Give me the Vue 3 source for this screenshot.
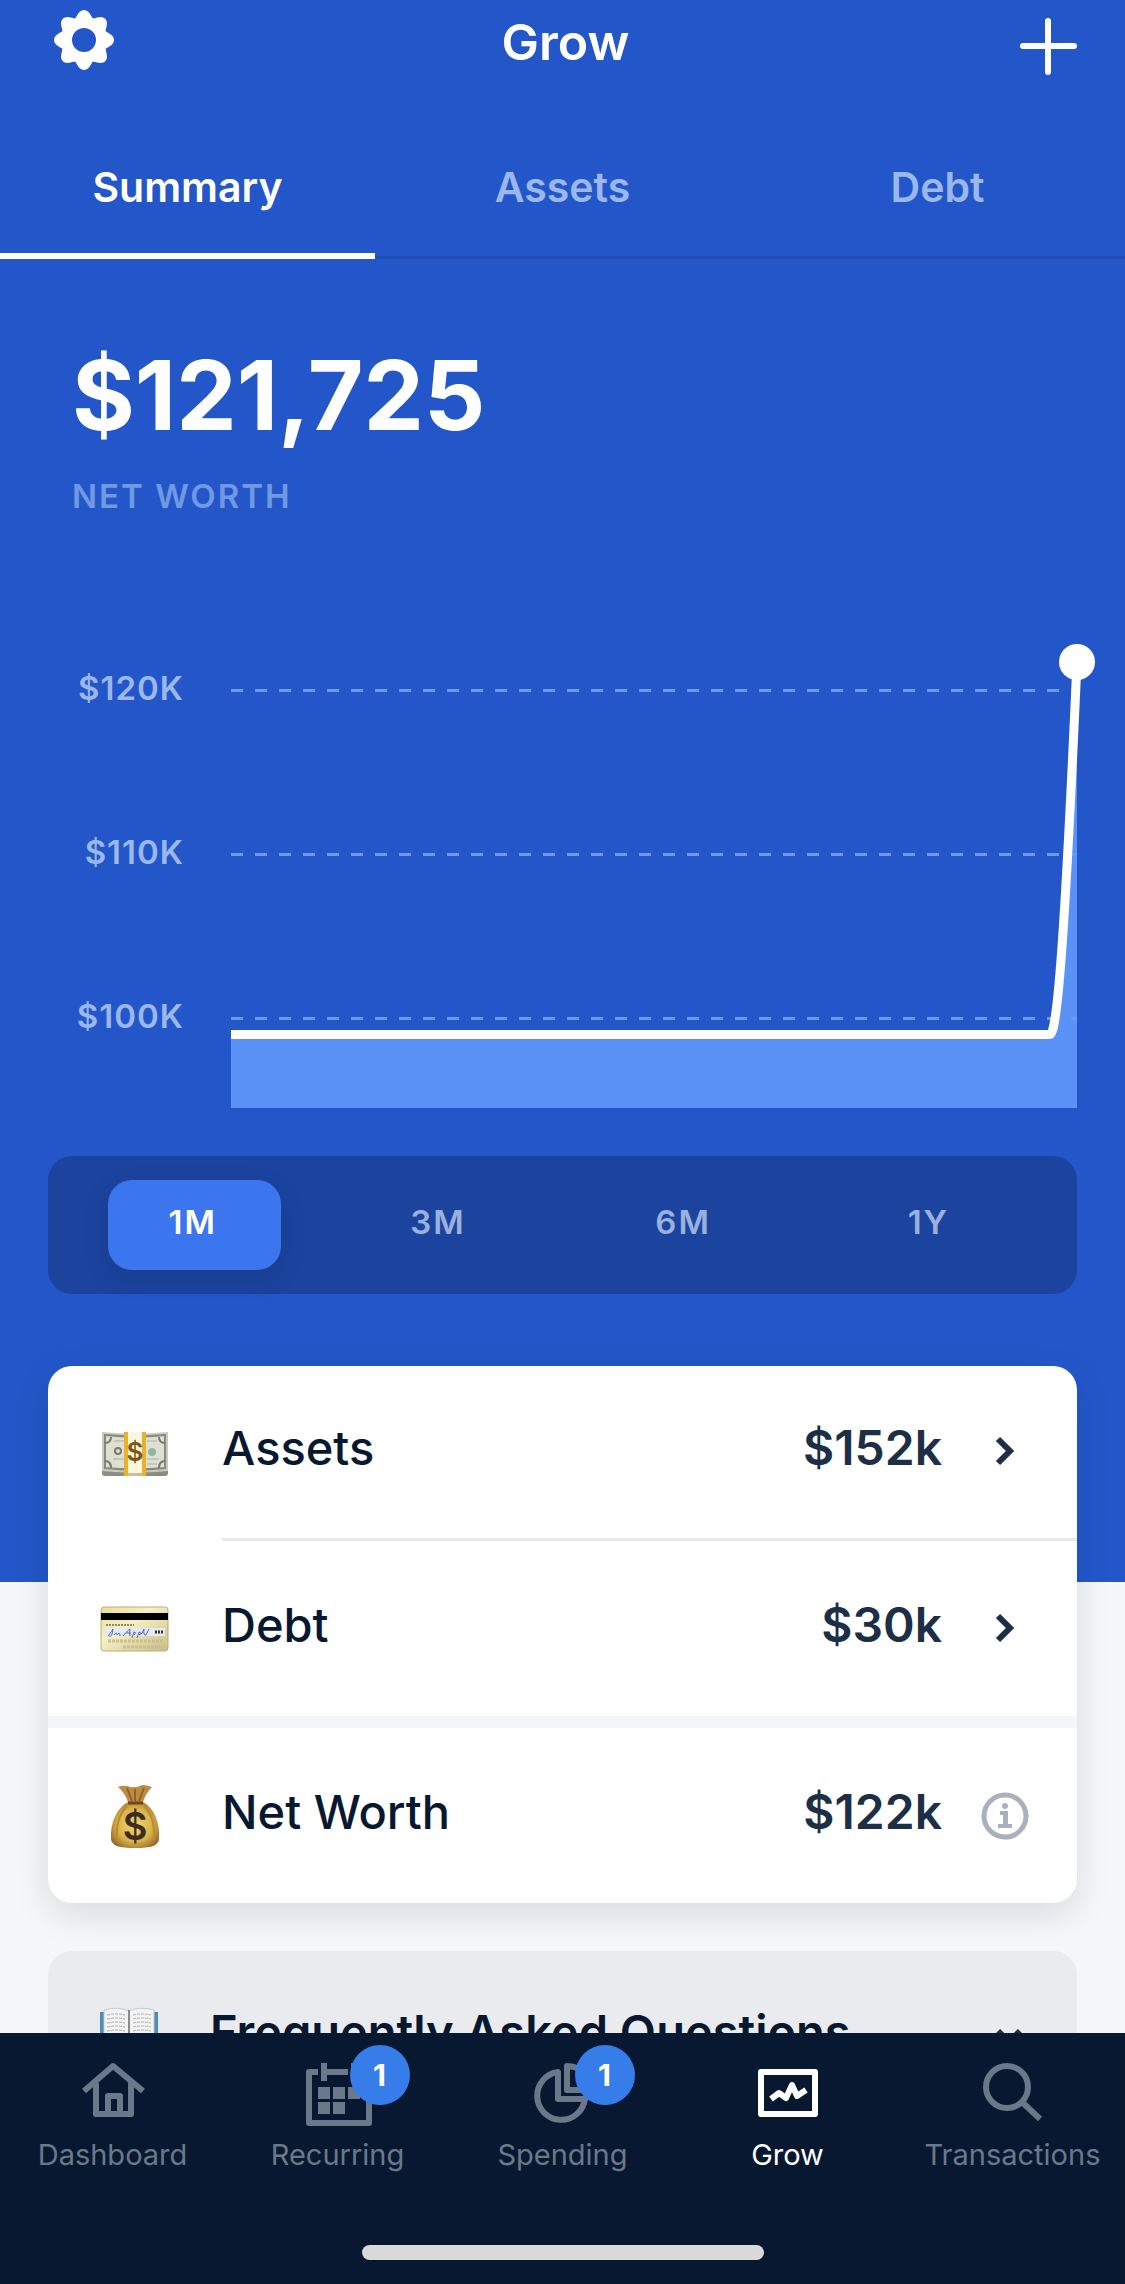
<template>
  <div class="app">
    <main class="content">
      <section class="hero">
        <header class="topbar">
          <button class="icon-btn" type="button" aria-label="Settings">
            <svg viewBox="0 0 60 60" width="60" height="60">
              <path :d="gearPath" fill="#fff" fill-rule="evenodd" stroke="#fff" stroke-width="4" stroke-linejoin="round" />
            </svg>
          </button>
          <h1>Grow</h1>
          <button class="icon-btn" type="button" aria-label="Add">
            <svg viewBox="0 0 60 60" width="60" height="60">
              <path d="M31 11V62M6 36H57" stroke="#fff" stroke-width="6" stroke-linecap="round" />
            </svg>
          </button>
        </header>

        <nav class="tabs">
          <button
            v-for="tab in tabs"
            :key="tab"
            type="button"
            class="tab"
            :class="{ active: tab === activeTab }"
            @click="activeTab = tab"
          >{{ tab }}</button>
        </nav>

        <div class="total">
          <p class="total-value">$121,725</p>
          <p class="total-label">NET WORTH</p>
        </div>

        <svg class="chart" viewBox="0 0 1125 478">
          <path class="area" d="M231 404.500H1047C1058 404.500 1064 340 1077 32V478H231Z" />
          <g v-for="line in gridLines" :key="line.label">
            <text class="axis-label" x="184" :y="line.y + 9" text-anchor="end">{{ line.label }}</text>
            <line class="grid" x1="231" x2="1077" :y1="line.y" :y2="line.y" />
          </g>
          <path class="trend" d="M231 404.500H1050C1058 404.500 1066 280 1077 32" />
          <circle cx="1077" cy="32" r="18" fill="#fff" />
        </svg>

        <div class="ranges">
          <button
            v-for="range in ranges"
            :key="range"
            type="button"
            class="range"
            :class="{ active: range === activeRange }"
            @click="activeRange = range"
          >{{ range }}</button>
        </div>
      </section>

      <section class="card">
        <a class="row" href="#assets">
          <span class="emoji">
            <svg viewBox="0 0 72 72" width="72" height="72">
              <rect x="3" y="17" width="66" height="41" rx="3" fill="#8b8d80" />
              <path d="M3 14Q36 17 69 14V53Q36 56 3 53Z" fill="#c9cbbb" />
              <path d="M6 17Q36 20 66 17V50Q36 53 6 50Z" fill="#dfe0d2" stroke="#878a7d" stroke-width="2" />
              <path d="M6 25Q12 25 12 19M6 43Q12 43 12 50M66 25Q60 25 60 19M66 43Q60 43 60 50" fill="none" stroke="#777a6f" stroke-width="2" />
              <circle cx="19" cy="33" r="3" fill="none" stroke="#777a6f" stroke-width="2" />
              <circle cx="53" cy="34" r="4" fill="#8fb99f" />
              <path d="M14 41H25M48 41H60M15 23H25M48 23H58M48 46H58" stroke="#aeb1a2" stroke-width="1" />
              <rect x="25" y="14" width="22" height="44" fill="#e8b22f" />
              <rect x="29" y="14" width="14" height="41" fill="#fff6dc" />
              <rect x="29" y="55" width="14" height="3" fill="#cbbd99" />
              <text x="36" y="43" text-anchor="middle" font-size="26" font-weight="600" fill="#7b5514">$</text>
            </svg>
          </span>
          <span class="row-body divided">
            <span class="name">Assets</span>
            <span class="amount">$152k</span>
            <svg class="chevron" viewBox="0 0 48 48" width="48" height="48"><path d="M17 11L29 23L17 35" /></svg>
          </span>
        </a>
        <a class="row" href="#debt">
          <span class="emoji">
            <svg viewBox="0 0 72 72" width="72" height="72">
              <defs>
                <linearGradient id="cardGold" x1="0" y1="0" x2="1" y2="1">
                  <stop offset="0" stop-color="#e9dc9c" />
                  <stop offset="0.400" stop-color="#f7f0c4" />
                  <stop offset="1" stop-color="#c9bd83" />
                </linearGradient>
              </defs>
              <rect x="2" y="14" width="67" height="44" rx="3" fill="url(#cardGold)" stroke="#b9ae7c" />
              <rect x="2" y="20" width="67" height="7" fill="#000" />
              <path d="M7 32H35" stroke="#8f8862" stroke-width="2" stroke-dasharray="2 1" />
              <rect x="6" y="35" width="60" height="8" fill="#e6e9f0" />
              <path d="M9 43Q13 38 14 36Q13 45 10 43M15 42Q18 38 18 42Q21 38 21 43M24 43Q29 37 31 36Q30 40 31 43M27 40H32M33 45L35 39Q38 39 35 42M38 45L40 39Q43 39 40 42Q44 41 45 36Q44 43 47 42L50 36" fill="none" stroke="#4e69c8" stroke-width="1" />
              <path d="M56 39H64" stroke="#333" stroke-width="3" stroke-dasharray="2 1" />
              <path d="M9 48H65M24 54H65" stroke="#cabf90" stroke-width="3" stroke-dasharray="3 1" />
            </svg>
          </span>
          <span class="row-body">
            <span class="name">Debt</span>
            <span class="amount">$30k</span>
            <svg class="chevron" viewBox="0 0 48 48" width="48" height="48"><path d="M17 11L29 23L17 35" /></svg>
          </span>
        </a>
        <div class="row separated">
          <span class="emoji">
            <svg viewBox="0 0 72 72" width="72" height="72">
              <defs>
                <radialGradient id="bagGold" cx="0.500" cy="0.500" r="0.600">
                  <stop offset="0" stop-color="#f3d768" />
                  <stop offset="0.600" stop-color="#d9b44c" />
                  <stop offset="1" stop-color="#946425" />
                </radialGradient>
              </defs>
              <path d="M19 7Q24 5 28 6Q36 9 43 5Q48 5 53 7Q47 13 44 22H29Q26 13 19 7Z" fill="#bd8b45" />
              <path d="M28 8L33 21M36 9V21M45 8L40 21" stroke="#8f6228" stroke-width="2" />
              <path d="M29 22H44C55 28 61 42 60 59C59 66 52 68 36 68C20 68 13 66 12 59C11 42 18 28 29 22Z" fill="url(#bagGold)" />
              <path d="M28 26C20 34 17 46 18 60M45 26C53 34 56 46 55 60" fill="none" stroke="#b98b2d" stroke-width="2" />
              <path d="M29 23H44" stroke="#704718" stroke-width="3" />
              <text x="36" y="60" text-anchor="middle" font-size="38" font-weight="600" fill="#3b2d22">$</text>
            </svg>
          </span>
          <span class="row-body">
            <span class="name">Net Worth</span>
            <span class="amount">$122k</span>
            <button class="icon-btn" type="button" aria-label="About net worth">
              <svg viewBox="0 0 48 48" width="48" height="48" fill="#a9b1be">
                <circle cx="24" cy="24" r="21" fill="none" stroke="#a9b1be" stroke-width="5" />
                <circle cx="24" cy="14" r="3" />
                <path d="M19 19H27V32H31V36H17V32H22V23H19Z" />
              </svg>
            </button>
          </span>
        </div>
      </section>

      <button class="faq" type="button">
        <svg viewBox="0 0 60 60" width="60" height="60">
          <path d="M1 10H59V53H1Z" fill="#4a8db5" />
          <path d="M5 8Q20 4 30 9Q40 4 55 8V50Q40 47 30 52Q20 47 5 50Z" fill="#f3f3f3" stroke="#c9c9c9" />
          <path d="M30 8V52" stroke="#888" stroke-width="2" />
          <path d="M8 13Q18 11 26 13M8 17Q18 15 26 17M8 21Q18 19 26 21M8 25Q18 23 26 25M8 29Q18 27 26 29M34 13Q42 11 52 13M34 17Q42 15 52 17M34 21Q42 19 52 21M34 25Q42 23 52 25M34 29Q42 27 52 29" fill="none" stroke="#aaa" stroke-width="1" stroke-dasharray="3 1" />
        </svg>
        <span class="faq-title">Frequently Asked Questions</span>
        <svg class="chevron" viewBox="0 0 48 48" width="48" height="48"><path d="M15 23L26 34L37 23" /></svg>
      </button>
    </main>

    <footer class="bottom">
      <nav class="menu">
        <a
          v-for="item in menu"
          :key="item.label"
          href="#"
          class="menu-item"
          :class="{ active: item.label === 'Grow' }"
        >
          <span class="menu-icon">
            <svg viewBox="0 0 72 72" width="72" height="72">
              <path :d="item.stroke" fill="none" stroke="currentColor" stroke-width="6" stroke-linejoin="round" />
              <path v-if="item.fill" :d="item.fill" fill="currentColor" />
            </svg>
            <span v-if="item.badge" class="badge">{{ item.badge }}</span>
          </span>
          <span>{{ item.label }}</span>
        </a>
      </nav>
      <div class="home-bar"></div>
    </footer>
  </div>
</template>

<script setup>
import { ref } from 'vue';

const tabs = ['Summary', 'Assets', 'Debt'];
const activeTab = ref('Summary');

const ranges = ['1M', '3M', '6M', '1Y'];
const activeRange = ref('1M');

const gridLines = [
    { label: '$120K', y: 60.5 },
    { label: '$110K', y: 224.5 },
    { label: '$100K', y: 388.5 },
];

// eight soft teeth around a round hole, the 4px stroke rounds them off
const gearPath = (() => {
    const points = [];
    for(let i = 0; i < 160; i++){
        const a = i / 160 * Math.PI * 2;
        const r = 24.7 + 3.3 * Math.cos(8 * a);
        points.push((30 + r * Math.cos(a)).toFixed(2) + ' ' + (30 + r * Math.sin(a)).toFixed(2));
    }
    return 'M' + points.join('L') + 'ZM16 30a14 14 0 1 0 28 0a14 14 0 1 0 -28 0Z';
})();

const menu = [
    {
        label: 'Dashboard',
        stroke: 'M7 34L36 9L66 34M19 26V57H54V26M31 57V39H43V57',
    },
    {
        label: 'Recurring',
        badge: 1,
        stroke: 'M16 15H7V66H67V15H58M22 6V24M22 15H46M52 6V24',
        fill: 'M16 30h12v12h-12zM31 30h12v12h-12zM46 30h12v12h-12zM16 45h12v12h-12zM31 45h12v12h-12z',
    },
    {
        label: 'Spending',
        badge: 1,
        stroke: 'M31 15V42H58A24 24 0 1 1 31 15ZM40 9V33H64A24 24 0 0 0 40 9Z',
    },
    {
        label: 'Grow',
        stroke: 'M9 15H63V57H9ZM19 42L27 36L34 41L40 28L45 39L54 33',
    },
    {
        label: 'Transactions',
        stroke: 'M9 30A21 21 0 1 0 51 30A21 21 0 1 0 9 30ZM45 45L63 62',
    },
];
</script>

<style>
body{
    margin: 0;
    background: #f5f7f9;
}
</style>

<style scoped>
.app{
    display: flex;
    flex-direction: column;
    height: 100vh;
    font-family: Inter, "Liberation Sans", sans-serif;
    color: #081831;
}
.app button{
    font-family: inherit;
    border: none;
    background: none;
    padding: 0;
    cursor: pointer;
}
.app a{
    color: inherit;
    text-decoration: none;
}
.app svg{
    display: block;
    flex: none;
    overflow: visible;
}
.content{
    flex: 1;
    min-height: 0;
    overflow-y: auto;
    scrollbar-width: none;
}
.hero{
    background: #2357c9;
    color: #fff;
    padding-bottom: 288px;
}
.topbar{
    display: flex;
    align-items: center;
    justify-content: space-between;
    height: 80px;
    padding: 0 48px 6px 54px;
}
.topbar h1{
    margin: 0;
    padding-top: 4px;
    font-size: 50px;
    line-height: 60px;
    font-weight: 600;
}
.tabs{
    display: grid;
    grid-template-columns: repeat(3, 1fr);
}
.app .tab{
    padding: 72px 0 43px;
    font-size: 41px;
    line-height: 58px;
    font-weight: 600;
    color: #9bb7ec;
    box-shadow: inset 0 -3px #1f4db4;
}
.app .tab.active{
    color: #fff;
    box-shadow: inset 0 -6px #fff;
}
.total{
    padding: 80px 72px 0;
}
.total p{
    margin: 0;
}
.total-value{
    font-size: 96px;
    line-height: 112px;
    font-weight: 700;
}
.total .total-label{
    margin-top: 24px;
    font-size: 33px;
    line-height: 42px;
    font-weight: 600;
    letter-spacing: 2px;
    color: #7199e2;
}
.app .chart{
    width: 100%;
    margin-top: 113px;
}
.axis-label{
    font-size: 33px;
    font-weight: 600;
    letter-spacing: 1px;
    fill: #9bb7ec;
}
.grid{
    stroke: #6c9ae8;
    stroke-width: 3;
    stroke-dasharray: 12 12;
}
.area{
    fill: #5b92f8;
}
.trend{
    fill: none;
    stroke: #fff;
    stroke-width: 9;
}
.ranges{
    display: grid;
    grid-template-columns: repeat(4, 1fr);
    margin: 48px 48px 0;
    padding: 24px;
    border-radius: 24px;
    background: #1c449f;
}
.app .range{
    margin: 0 36px;
    height: 90px;
    padding: 0 4px 6px 0;
    border-radius: 24px;
    font-size: 33px;
    font-weight: 600;
    letter-spacing: 2px;
    color: #9bb1dd;
}
.app .range.active{
    background: #3b76ef;
    color: #fff;
    box-shadow: 0 8px 24px rgba(8, 24, 49, 0.15);
}
.card{
    position: relative;
    margin: -216px 48px 0;
    border-radius: 24px;
    background: #fff;
    box-shadow: 0 12px 36px rgba(8, 24, 49, 0.12);
}
.row{
    display: flex;
    height: 175px;
}
.row.separated{
    border-top: 12px solid #f3f6f8;
}
.emoji{
    display: flex;
    align-items: center;
    width: 123px;
    padding-left: 51px;
}
.row-body{
    flex: 1;
    display: flex;
    align-items: center;
    padding-right: 48px;
}
.row-body.divided{
    border-bottom: 3px solid #e6e8eb;
}
.name{
    flex: 1;
    padding-bottom: 8px;
    font-size: 47px;
    line-height: 60px;
    font-weight: 500;
}
.amount{
    padding: 0 39px 8px 0;
    font-size: 48px;
    line-height: 60px;
    font-weight: 600;
    color: #1d2f47;
}
.chevron{
    fill: none;
    stroke: #1d2f47;
    stroke-width: 6;
}
.app .faq{
    display: flex;
    align-items: center;
    width: calc(100% - 96px);
    height: 175px;
    margin: 48px;
    padding: 0 46px 14px 51px;
    border-radius: 24px;
    background: #e9ebee;
    color: inherit;
    text-align: left;
}
.faq-title{
    flex: 1;
    padding-left: 51px;
    font-size: 47px;
    line-height: 60px;
    font-weight: 600;
}
.bottom{
    position: relative;
    flex: none;
    background: #081831;
}
.menu{
    display: grid;
    grid-template-columns: repeat(5, 1fr);
    padding-top: 24px;
}
.menu-item{
    display: flex;
    flex-direction: column;
    align-items: center;
    gap: 8px;
    font-size: 29px;
    line-height: 36px;
}
.app .menu-item{
    color: #6b7889;
}
.app .menu-item.active{
    color: #fff;
}
.menu-icon{
    position: relative;
}
.badge{
    position: absolute;
    top: -12px;
    right: -36px;
    width: 60px;
    border-radius: 50%;
    background: #377dea;
    color: #fff;
    font-size: 30px;
    line-height: 60px;
    font-weight: 700;
    text-align: center;
}
.home-bar{
    width: 402px;
    height: 15px;
    margin: 72px auto 24px;
    border-radius: 8px;
    background: #dadada;
}
</style>
